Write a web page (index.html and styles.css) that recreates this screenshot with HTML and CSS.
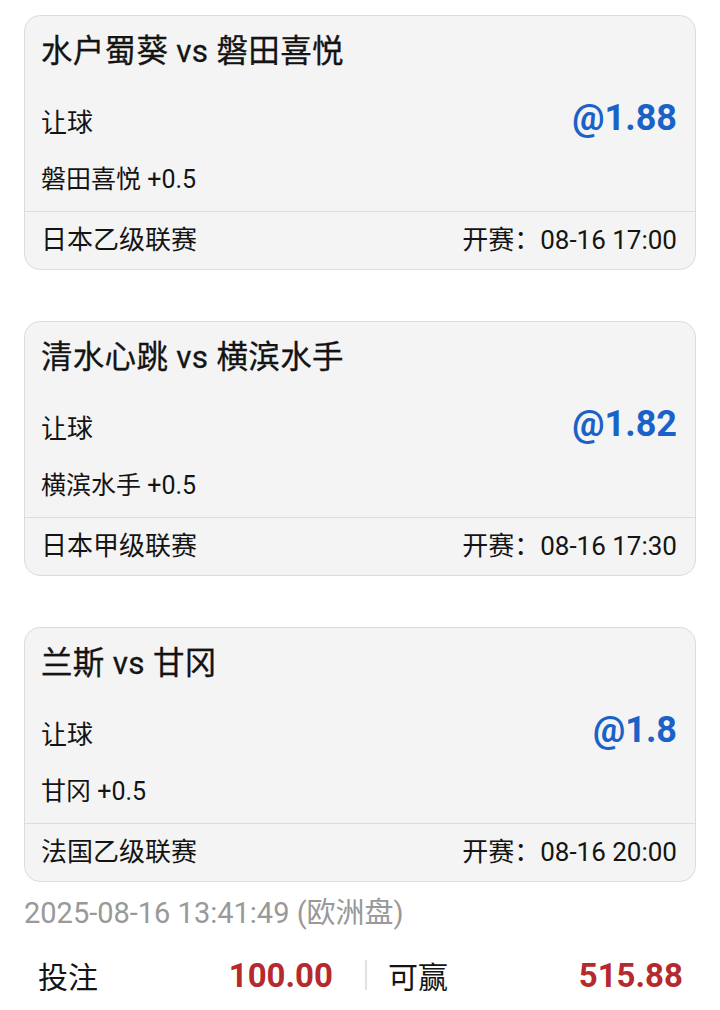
FILE: index.html
```html
<!DOCTYPE html>
<html lang="zh-CN">
    <head>
        <meta name="viewport" content="width=device-width, initial-scale=1.0">
        <meta charset="utf-8">
        <title>投注单</title>
        <link rel="stylesheet" href="styles.css">
    </head>
    <body>
        <main class="slip">
            <section class="match-card">
                <div class="match-body">
                    <h2 class="match-title">水户蜀葵 vs 磐田喜悦</h2>
                    <div class="bet-row">
                        <span class="bet-type">让球</span>
                        <span class="odds">@1.88</span>
                    </div>
                    <div class="pick">磐田喜悦 +0.5</div>
                </div>
                <div class="match-foot">
                    <span>日本乙级联赛</span>
                    <span>开赛：08-16 17:00</span>
                </div>
            </section>

            <section class="match-card">
                <div class="match-body">
                    <h2 class="match-title">清水心跳 vs 横滨水手</h2>
                    <div class="bet-row">
                        <span class="bet-type">让球</span>
                        <span class="odds">@1.82</span>
                    </div>
                    <div class="pick">横滨水手 +0.5</div>
                </div>
                <div class="match-foot">
                    <span>日本甲级联赛</span>
                    <span>开赛：08-16 17:30</span>
                </div>
            </section>

            <section class="match-card">
                <div class="match-body">
                    <h2 class="match-title">兰斯 vs 甘冈</h2>
                    <div class="bet-row">
                        <span class="bet-type">让球</span>
                        <span class="odds">@1.8</span>
                    </div>
                    <div class="pick">甘冈 +0.5</div>
                </div>
                <div class="match-foot">
                    <span>法国乙级联赛</span>
                    <span>开赛：08-16 20:00</span>
                </div>
            </section>

            <p class="stamp">2025-08-16 13:41:49 (欧洲盘)</p>

            <div class="totals">
                <div class="total-half">
                    <span class="total-label">投注</span>
                    <span class="total-value">100.00</span>
                </div>
                <span class="total-divider"></span>
                <div class="total-half">
                    <span class="total-label">可赢</span>
                    <span class="total-value">515.88</span>
                </div>
            </div>
        </main>
    </body>
</html>
```

FILE: styles.css
```css
body {
    margin: 0;
    background-color: #ffffff;
    color: #141414;
    font-family: Roboto, "Noto Sans CJK SC", sans-serif;
}

.slip {
    padding-top: 15px;
}

.match-card {
    margin: 0 24px 51px 24px;
    border: 1px solid #dcdcdc;
    border-radius: 16px;
    background-color: #f4f4f4;
}

.match-card:nth-of-type(3) {
    margin-bottom: 0;
}

.match-body {
    padding: 16px 18px 13px 16px;
}

.match-title {
    margin: 0;
    font-size: 31.5px;
    font-weight: 400;
    line-height: 40px;
    letter-spacing: 0.3px;
    -webkit-text-stroke: 0.3px #141414;
}

.bet-row {
    display: flex;
    justify-content: space-between;
    align-items: center;
    margin-top: 26px;
    height: 44px;
}

.bet-type {
    font-size: 26px;
}

.odds {
    color: #1a62c8;
    font-size: 36px;
    font-weight: 700;
    margin-top: -5px;
}

.pick {
    margin-top: 20px;
    font-size: 25px;
    line-height: 36px;
}

.match-foot {
    display: flex;
    justify-content: space-between;
    height: 57px;
    line-height: 57px;
    padding: 0 18px 0 16px;
    border-top: 1px solid #dcdcdc;
    font-size: 26px;
}

.stamp {
    margin: 11px 24px 0 24px;
    color: #999999;
    font-size: 29px;
    line-height: 40px;
}

.totals {
    display: flex;
    align-items: center;
    margin-top: 22px;
    height: 40px;
    padding-left: 38px;
}

.total-half {
    display: flex;
    justify-content: space-between;
    align-items: center;
    width: 295px;
}

.total-label {
    font-size: 30px;
}

.total-value {
    color: #b52a2e;
    font-size: 33px;
    font-weight: 700;
}

.total-divider {
    width: 2px;
    height: 30px;
    margin: 0 21px 0 32px;
    background-color: #e2e2e2;
}
```
